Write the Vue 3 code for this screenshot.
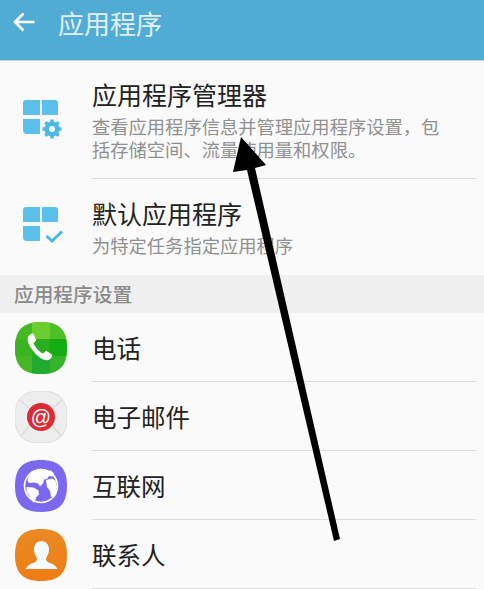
<template>
  <div class="page">
    <header class="top-bar">
      <svg class="back" viewBox="0 0 24 24" width="24" height="24">
        <path d="M22.500 12H3M11.500 3.500L3 12l8.500 8.500" fill="none" stroke="#fff" stroke-width="2.600" />
      </svg>
      <span class="top-title">应用程序</span>
    </header>

    <div class="row row-manager">
      <div class="icon-col">
        <svg viewBox="0 0 44 44" width="44" height="44">
          <path d="M1 5a3 3 0 0 1 3-3h14v15H1z" fill="#5cc1ea" />
          <path d="M20 2h13a3 3 0 0 1 3 3v12H20z" fill="#5cc1ea" />
          <path d="M1 21h17v15H5a4 4 0 0 1-4-4z" fill="#5cc1ea" />
          <circle cx="30" cy="31" r="5.500" fill="none" stroke="#4db8e6" stroke-width="4" />
          <path d="M30 21.500v19M20.500 31h19M23.300 24.300l13.400 13.400M36.700 24.300L23.300 37.700" stroke="#4db8e6" stroke-width="3.400" />
          <circle cx="30" cy="31" r="3" fill="#fafafa" />
        </svg>
      </div>
      <div class="row-text">
        <div class="row-title">应用程序管理器</div>
        <div class="row-desc">查看应用程序信息并管理应用程序设置，包括存储空间、流量使用量和权限。</div>
      </div>
    </div>

    <div class="row row-default">
      <div class="icon-col">
        <svg viewBox="0 0 44 44" width="44" height="44">
          <path d="M1 5a3 3 0 0 1 3-3h14v15H1z" fill="#5cc1ea" />
          <path d="M20 2h13a3 3 0 0 1 3 3v12H20z" fill="#5cc1ea" />
          <path d="M1 21h17v15H5a4 4 0 0 1-4-4z" fill="#5cc1ea" />
          <path d="M24.500 31l5.500 5 10-9.500" fill="none" stroke="#4db8e6" stroke-width="3" />
        </svg>
      </div>
      <div class="row-text no-line">
        <div class="row-title">默认应用程序</div>
        <div class="row-desc">为特定任务指定应用程序</div>
      </div>
    </div>

    <div class="section">应用程序设置</div>

    <div v-for="app in apps" :key="app.name" class="row app-row">
      <div class="icon-col app-icon-col">
        <svg v-if="app.id === 'phone'" viewBox="0 0 52 52" width="52" height="52">
          <defs>
            <clipPath id="phone-clip"><path :d="squircle" /></clipPath>
          </defs>
          <g clip-path="url(#phone-clip)">
            <rect width="52" height="52" fill="#45b923" />
            <rect x="17" width="18" height="17" fill="#6ccd2e" />
            <rect x="35" width="17" height="17" fill="#4dc026" />
            <rect y="17" width="17" height="17" fill="#3ab421" />
            <rect x="17" y="17" width="18" height="17" fill="#2bae1e" />
            <rect x="35" y="17" width="17" height="17" fill="#14ad14" />
            <rect y="34" width="17" height="18" fill="#45b726" />
            <rect x="17" y="34" width="18" height="18" fill="#20aa30" />
            <rect x="35" y="34" width="17" height="18" fill="#35b42c" />
          </g>
          <path d="M14 13.500c1.500-1.500 3.500-2 4.500-1.500l2.500 5.500c.3.800-.1 1.500-2.500 3.500 1.500 4 5 8.500 9.500 10.500 2-2 2.800-2.800 3.500-2.500l5.500 3.500c.8.800-.5 3.500-2.500 5-2 1.500-6 .7-10.500-2.500C19 31 15 25 13 20c-.8-2.500-.2-5 1-6.500z" fill="#fff" />
        </svg>

        <svg v-else-if="app.id === 'mail'" viewBox="0 0 52 52" width="52" height="52">
          <path :d="squircle" fill="#eeeeee" stroke="#dedede" />
          <path d="M5 9l21 19L47 9M6 45l14-17M46 45L32 28" fill="none" stroke="#dadada" stroke-width="1.200" />
          <circle cx="26" cy="26" r="14" fill="#dd2a35" />
          <text x="26" y="33" text-anchor="middle" class="at">@</text>
        </svg>

        <svg v-else-if="app.id === 'web'" viewBox="0 0 52 52" width="52" height="52">
          <path :d="squircle" fill="#7a68ee" />
          <circle cx="26" cy="26" r="16.500" fill="#7a68ee" stroke="#fff" stroke-width="1.600" />
          <path d="M15 14c3-3 8-5 13-4.500l3 1.500 5-.5 3 3-1 3-4-.5-2 3-3 .5-1 4-3 3-2-3-4-1-5 .5-1.500-2.500C13 18 14 16 15 14z" fill="#fff" />
          <path d="M11.500 27l7 .5 5 3 .5 4-3 3-1 4.500-2 .5-3-6-3.500-4.500z" fill="#fff" />
          <path d="M31 20l6-1.500 3.500 2 1.500 6-1 6-3 4-2 .5-1-6-3-4z" fill="#fff" />
        </svg>

        <svg v-else viewBox="0 0 52 52" width="52" height="52">
          <defs>
            <linearGradient id="contact-bg" x1="0" y1="0" x2="0" y2="1">
              <stop offset="0" stop-color="#ea8a24" />
              <stop offset="1" stop-color="#ee7d12" />
            </linearGradient>
          </defs>
          <path :d="squircle" fill="url(#contact-bg)" />
          <path d="M26 12c5 0 8 3.500 8 8.500 0 3.500-1.500 6.500-3 9 0 2.500 1 3.500 4 4.500 3 1 5.500 2.500 7.500 6H10.500c2-3.500 4.500-5 7.500-6 3-1 4-2 4-4.500-1.500-2.500-3-5.500-3-9 0-5 3-8.500 7-8.500z" fill="#f6fbff" />
        </svg>
      </div>
      <div class="row-text app-text">{{ app.name }}</div>
    </div>

    <!-- annotation drawn on top of the screenshot -->
    <svg class="arrow" viewBox="0 0 484 589" width="484" height="589">
      <path d="M241 137L266 165 255 168 340 539 334 541 247 170 233 172z" fill="#000" />
    </svg>
  </div>
</template>

<script setup>
const squircle = 'M26 0C44 0 52 8 52 26C52 44 44 52 26 52C8 52 0 44 0 26C0 8 8 0 26 0Z'

const apps = [
  { id: 'phone', name: '电话' },
  { id: 'mail', name: '电子邮件' },
  { id: 'web', name: '互联网' },
  { id: 'contact', name: '联系人' }
]
</script>

<style scoped>
.page {
  position: relative;
  width: 484px;
  height: 589px;
  overflow: hidden;
  background: #fafafa;
  font-family: "Noto Sans CJK SC", "Noto Sans", sans-serif;
}

.top-bar {
  display: flex;
  align-items: center;
  height: 61px;
  padding: 0 0 16px 12px;
  box-sizing: border-box;
  background: #50acd4;
  border-bottom: 1px solid #c4d8e0;
}

.back {
  flex: none;
}

.top-title {
  margin-left: 22px;
  font-size: 26px;
  color: #e2f1f7;
}

.row {
  display: flex;
  align-items: stretch;
}

.row-manager {
  height: 118px;
}

.row-default {
  height: 96px;
}

.icon-col {
  flex: none;
  width: 92px;
  box-sizing: border-box;
  padding-left: 22px;
  display: flex;
  align-items: center;
}

.row-text {
  flex: 1;
  margin-right: 8px;
  display: flex;
  flex-direction: column;
  justify-content: center;
  border-bottom: 1px solid #dedede;
}

.no-line {
  border-bottom: none;
}

.row-title {
  margin: -2px 0 2px;
  font-size: 25px;
  line-height: 34px;
  color: #222;
}

.row-desc {
  max-width: 358px;
  margin-top: 2px;
  font-size: 18.300px;
  line-height: 23px;
  color: #909090;
}

.section {
  height: 38px;
  padding-left: 14px;
  background: #f0f0f0;
  font-size: 19.700px;
  font-weight: 500;
  line-height: 38px;
  color: #8a8a8a;
}

.app-row {
  height: 68.600px;
  padding-top: 0.500px;
}

.app-icon-col {
  padding-left: 15px;
}

.app-text {
  justify-content: center;
  font-size: 24.500px;
  color: #222;
}

.at {
  font-family: "Liberation Sans", sans-serif;
  font-size: 20px;
  fill: #fff;
}

.arrow {
  position: absolute;
  left: 0;
  top: 0;
  pointer-events: none;
}
</style>
